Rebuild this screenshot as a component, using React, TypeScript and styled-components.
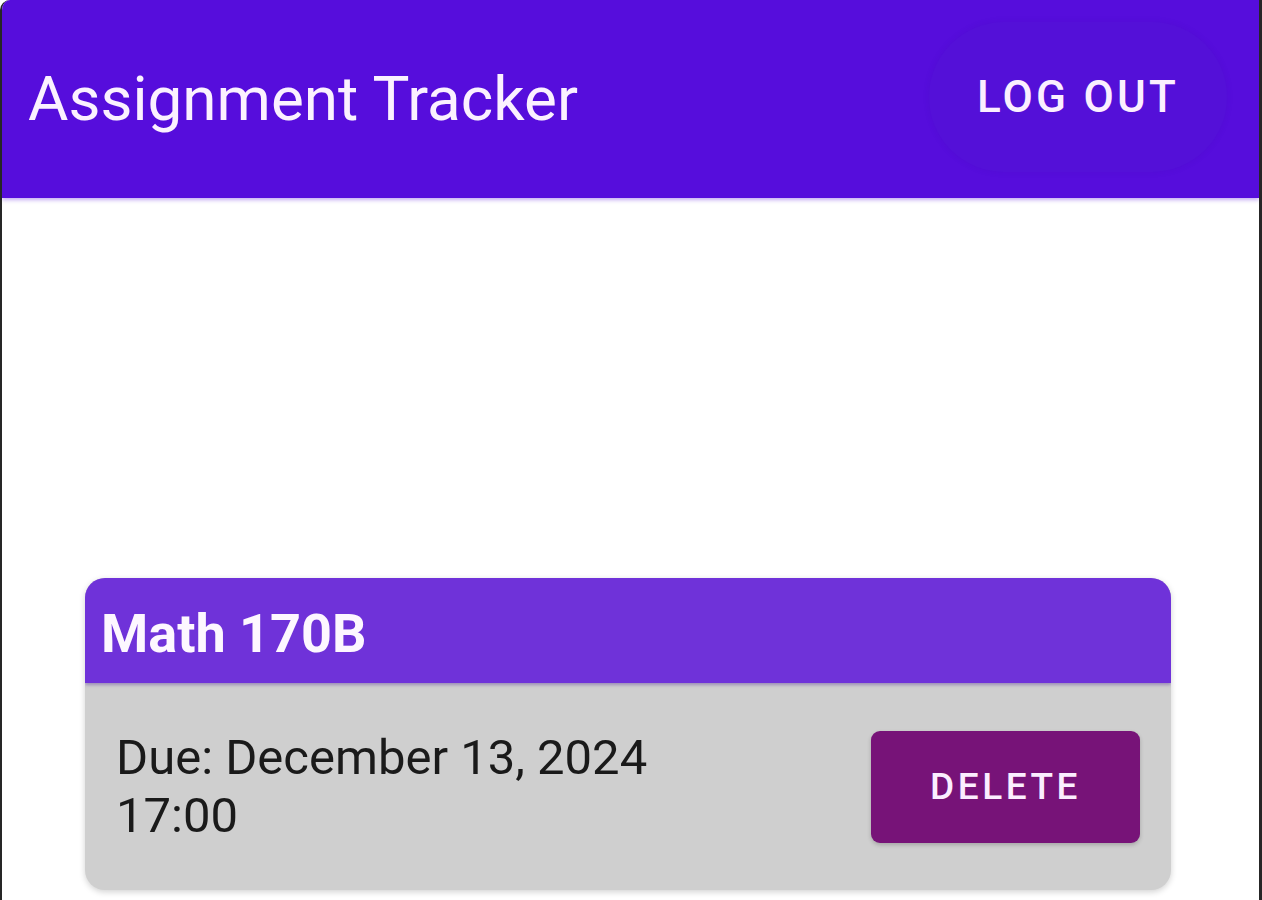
import React from "react";
import styled, { createGlobalStyle } from "styled-components";

const Global = createGlobalStyle`
  html, body { margin: 0; padding: 0; background: #ffffff; }
  body { font-family: Roboto, "Noto Sans", Arial, sans-serif; }
  * { box-sizing: border-box; }
`;

const Frame = styled.div`
  width: 1262px;
  height: 900px;
  overflow: hidden;
  background: #ffffff;
  border-left: 2px solid #262626;
  border-right: 3px solid #262626;
  border-top-left-radius: 10px;
  display: flex;
  flex-direction: column;
`;

const AppBar = styled.header`
  height: 198px;
  flex: none;
  background: #560ddc;
  display: flex;
  align-items: center;
  justify-content: space-between;
  padding: 0 32px 0 26px;
  box-shadow: 0 2px 4px rgba(86, 13, 220, 0.35);
  position: relative;
  z-index: 1;
`;

const Title = styled.h1`
  margin: 0;
  font-family: Roboto, sans-serif;
  font-weight: 400;
  font-size: 62px;
  color: #fbf1ff;
  margin-top: -2px;
`;

const TextButton = styled.button`
  border: none;
  background: #5410d8;
  box-shadow: 0 0 6px rgba(60, 0, 160, 0.12);
  border-radius: 75px;
  width: 298px;
  height: 150px;
  color: #fbefff;
  font-family: Roboto, sans-serif;
  font-weight: 500;
  font-size: 44px;
  letter-spacing: 3.2px;
  padding: 0;
  margin-top: -4px;
`;

const Content = styled.main`
  flex: 1;
  display: flex;
  flex-direction: column;
  padding: 380px 90px 0 83px;
`;

const Card = styled.section`
  width: 1086px;
  border-radius: 20px;
  overflow: hidden;
  box-shadow: 0 2px 6px rgba(0, 0, 0, 0.18);
  background: #cfcfcf;
`;

const CardHeader = styled.div`
  height: 105px;
  background: #6f32d9;
  display: flex;
  align-items: center;
  padding: 6px 16px 0;
  box-shadow: 0 2px 3px rgba(60, 20, 140, 0.35);
  position: relative;
`;

const CardTitle = styled.h2`
  margin: 0;
  font-family: Roboto, sans-serif;
  font-weight: 700;
  font-size: 54px;
  color: #fdf7ff;
`;

const CardBody = styled.div`
  height: 207px;
  display: flex;
  align-items: center;
  justify-content: space-between;
  padding: 0 31px 0 31px;
`;

const DueText = styled.p`
  margin: 0;
  font-family: Roboto, sans-serif;
  font-weight: 400;
  font-size: 49px;
  line-height: 58px;
  color: #1a1a1a;
  width: 560px;
`;

const DeleteButton = styled.button`
  border: none;
  width: 269px;
  height: 112px;
  border-radius: 9px;
  background: #771378;
  box-shadow: 0 2px 4px rgba(0, 0, 0, 0.2);
  color: #fbeeff;
  font-family: Roboto, sans-serif;
  font-weight: 500;
  font-size: 37px;
  letter-spacing: 3.5px;
  padding: 0;
  margin-top: 0;
`;

export default function App() {
  return (
    <>
      <Global />
      <Frame>
        <AppBar>
          <Title>Assignment Tracker</Title>
          <TextButton>LOG OUT</TextButton>
        </AppBar>
        <Content>
          <Card>
            <CardHeader>
              <CardTitle>Math 170B</CardTitle>
            </CardHeader>
            <CardBody>
              <DueText>
                Due: December 13, 2024
                <br />
                17:00
              </DueText>
              <DeleteButton>DELETE</DeleteButton>
            </CardBody>
          </Card>
        </Content>
      </Frame>
    </>
  );
}
